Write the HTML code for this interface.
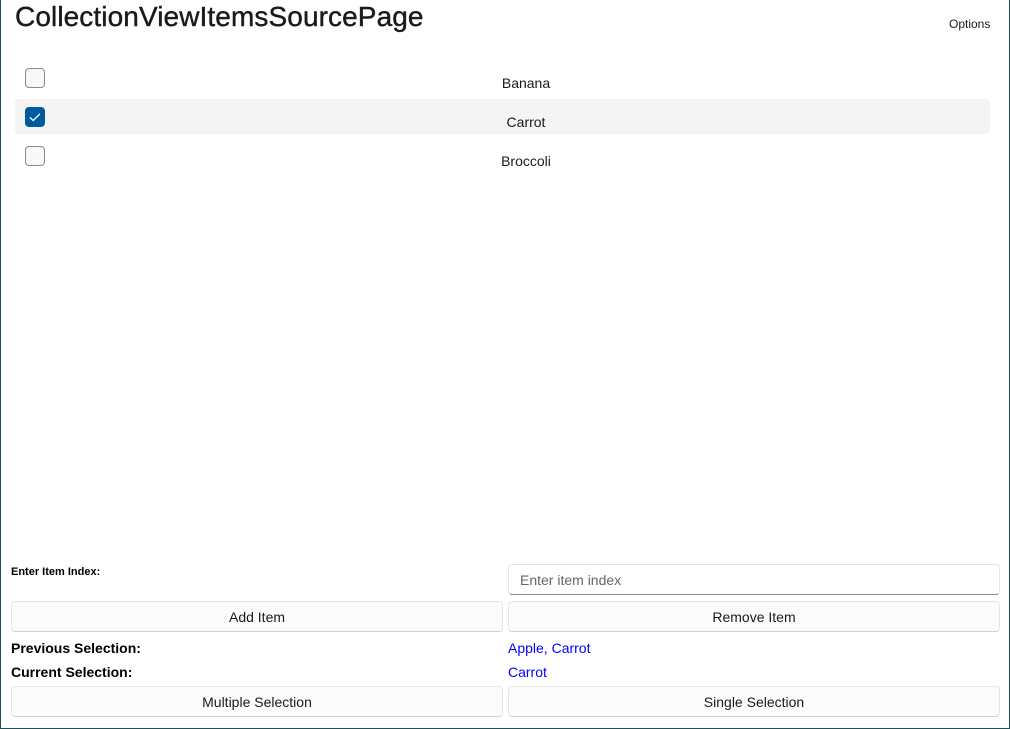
<!DOCTYPE html>
<html><head><style>
body{margin:0;width:1010px;height:729px;position:relative;overflow:hidden;background:#fff;font-family:"Segoe UI","Liberation Sans",sans-serif;color:#1a1a1a}
.a{position:absolute}
.frame{left:0;top:0;width:1008px;height:728px;border-left:1px solid #1d4f5f;border-right:1px solid #1d4f5f;border-bottom:1px solid #1d4f5f;box-sizing:content-box}
.cb{width:18px;height:18px;border:1px solid #8a8a8a;border-radius:4px;background:#f8f8f8;left:25px}
.btn{background:#fbfbfb;border:1px solid #e5e5e5;border-bottom-color:#d0d0d0;border-radius:4px;height:31px;box-sizing:border-box;text-align:center;line-height:30px;font-size:14px}
.lbl{font-size:14px;font-weight:bold;color:#000}
.blue{font-size:14px;color:#0000ff}
.item{font-size:14px;left:0;width:1052px;text-align:center}
</style></head><body>
<div class="a frame"></div>
<div class="a" style="left:15px;top:1px;font-size:28px;letter-spacing:0.1px;-webkit-text-stroke:0.4px #1a1a1a">CollectionViewItemsSourcePage</div>
<div class="a" style="left:949px;top:17px;font-size:12px">Options</div>
<div class="a" style="left:15px;top:99px;width:975px;height:35px;background:#f4f4f4;border-radius:4px"></div>
<div class="a cb" style="top:68px"></div>
<div class="a cb" style="top:107px;background:#005a9e;border-color:#005a9e"><svg width="18" height="18" viewBox="0 0 18 18"><path d="M4 9.5l3.2 3L14 5.8" fill="none" stroke="#fff" stroke-width="1.3"/></svg></div>
<div class="a cb" style="top:146px"></div>
<div class="a item" style="top:75px">Banana</div>
<div class="a item" style="top:114px">Carrot</div>
<div class="a item" style="top:153px">Broccoli</div>
<div class="a" style="left:11px;top:566px;font-size:11px;font-weight:bold;color:#000">Enter Item Index:</div>
<div class="a" style="left:508px;top:564px;width:492px;height:31px;box-sizing:border-box;border:1px solid #e5e5e5;border-bottom:1px solid #8a8a8a;border-radius:4px;font-size:14px;color:#666;padding-left:11px;line-height:30px">Enter item index</div>
<div class="a btn" style="left:11px;top:601px;width:492px">Add Item</div>
<div class="a btn" style="left:508px;top:601px;width:492px">Remove Item</div>
<div class="a lbl" style="left:11px;top:640px">Previous Selection:</div>
<div class="a lbl" style="left:11px;top:664px">Current Selection:</div>
<div class="a blue" style="left:508px;top:640px">Apple, Carrot</div>
<div class="a blue" style="left:508px;top:664px">Carrot</div>
<div class="a btn" style="left:11px;top:686px;width:492px">Multiple Selection</div>
<div class="a btn" style="left:508px;top:686px;width:492px">Single Selection</div>
</body></html>
